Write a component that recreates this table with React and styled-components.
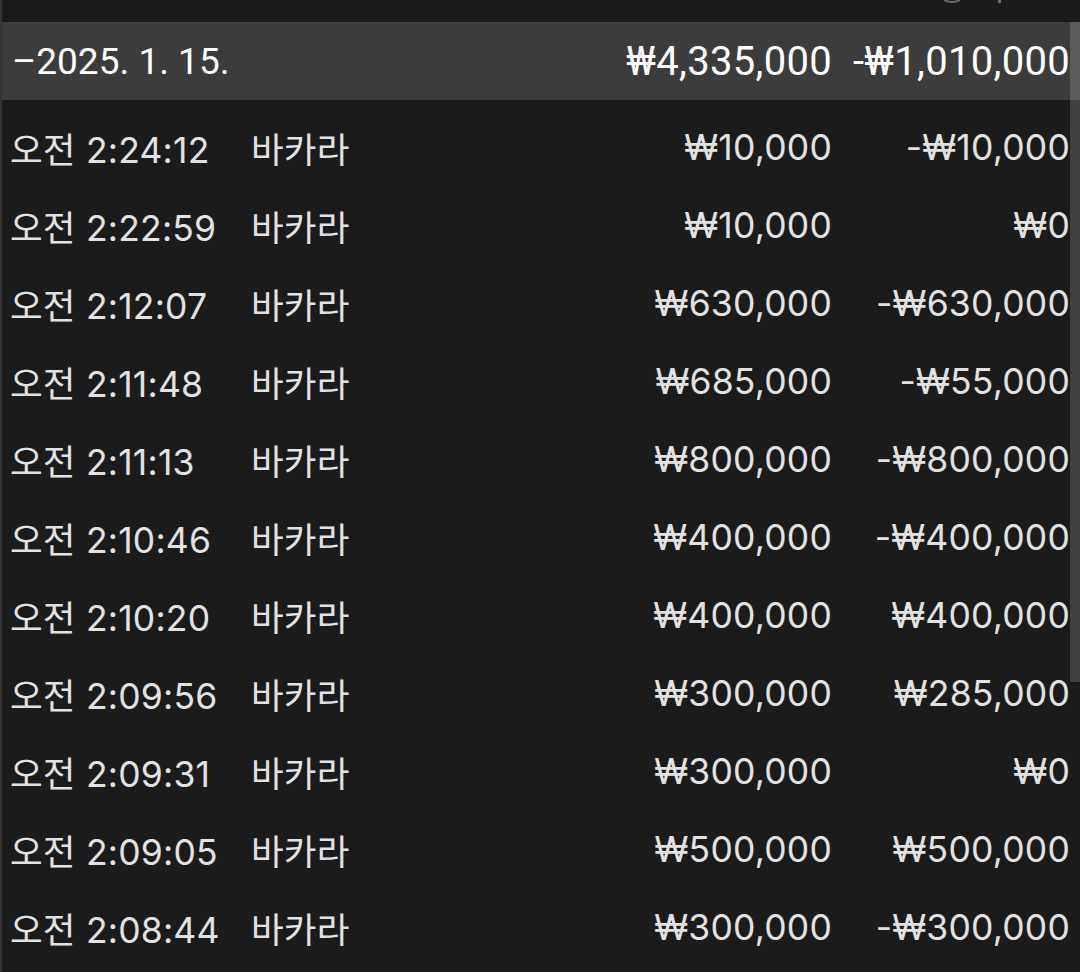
import React from "react";
import styled, { createGlobalStyle } from "styled-components";

const GlobalStyle = createGlobalStyle`
  html, body {
    margin: 0;
    padding: 0;
    background: #1b1b1b;
  }
  body {
    font-family: "Inter", "Noto Sans CJK KR", sans-serif;
  }
`;

const Screen = styled.div`
  position: relative;
  width: 1080px;
  height: 972px;
  overflow: hidden;
  background: #1b1b1b;
  border-left: 2px solid #343434;
  box-sizing: border-box;
`;

const TopBar = styled.div`
  height: 22px;
  background: #1a1a1a;
  display: flex;
  justify-content: flex-end;
  align-items: flex-start;
  padding-right: 70px;
`;

const HeaderRow = styled.div`
  height: 78px;
  background: #3c3c3c;
  display: grid;
  grid-template-columns: 1fr 240px 238px;
  align-items: center;
  padding: 0 10px 0 10px;
  color: #ffffff;
  font-family: "Roboto", "Noto Sans CJK KR", sans-serif;
  font-size: 37px;
`;

const HeaderAmount = styled.div`
  white-space: nowrap;
  text-align: right;
  font-size: 40px;
  letter-spacing: 0.3px;
`;

const List = styled.div`
  padding-top: 8px;
`;

const Row = styled.div`
  height: 78px;
  display: grid;
  grid-template-columns: 241px 1fr 240px 238px;
  align-items: center;
  padding: 0 10px 0 8px;
  color: #e2e2e2;
  font-size: 35.5px;
  letter-spacing: 0.2px;
`;

const Cell = styled.div`
  white-space: nowrap;
  text-align: ${(p) => (p.$right ? "right" : "left")};
`;

const Scrollbar = styled.div`
  position: absolute;
  right: 0;
  top: 22px;
  width: 10px;
  height: 660px;
  background: rgba(255, 255, 255, 0.17);
`;

const rows = [
  ["오전 2:24:12", "바카라", "₩10,000", "-₩10,000"],
  ["오전 2:22:59", "바카라", "₩10,000", "₩0"],
  ["오전 2:12:07", "바카라", "₩630,000", "-₩630,000"],
  ["오전 2:11:48", "바카라", "₩685,000", "-₩55,000"],
  ["오전 2:11:13", "바카라", "₩800,000", "-₩800,000"],
  ["오전 2:10:46", "바카라", "₩400,000", "-₩400,000"],
  ["오전 2:10:20", "바카라", "₩400,000", "₩400,000"],
  ["오전 2:09:56", "바카라", "₩300,000", "₩285,000"],
  ["오전 2:09:31", "바카라", "₩300,000", "₩0"],
  ["오전 2:09:05", "바카라", "₩500,000", "₩500,000"],
  ["오전 2:08:44", "바카라", "₩300,000", "-₩300,000"],
];

export default function App() {
  return (
    <>
      <GlobalStyle />
      <Screen>
        <TopBar>
          <svg width="70" height="6" viewBox="0 0 70 6">
            <path d="M4 0 Q12 4 20 0" stroke="#6a6a6a" strokeWidth="2" fill="none" />
            <rect x="58" y="0" width="3" height="3" fill="#6a6a6a" />
          </svg>
        </TopBar>
        <HeaderRow>
          <Cell>–2025. 1. 15.</Cell>
          <HeaderAmount>₩4,335,000</HeaderAmount>
          <HeaderAmount>-₩1,010,000</HeaderAmount>
        </HeaderRow>
        <List>
          {rows.map((r, i) => (
            <Row key={i}>
              <Cell>{r[0]}</Cell>
              <Cell>{r[1]}</Cell>
              <Cell $right>{r[2]}</Cell>
              <Cell $right>{r[3]}</Cell>
            </Row>
          ))}
        </List>
        <Scrollbar />
      </Screen>
    </>
  );
}
